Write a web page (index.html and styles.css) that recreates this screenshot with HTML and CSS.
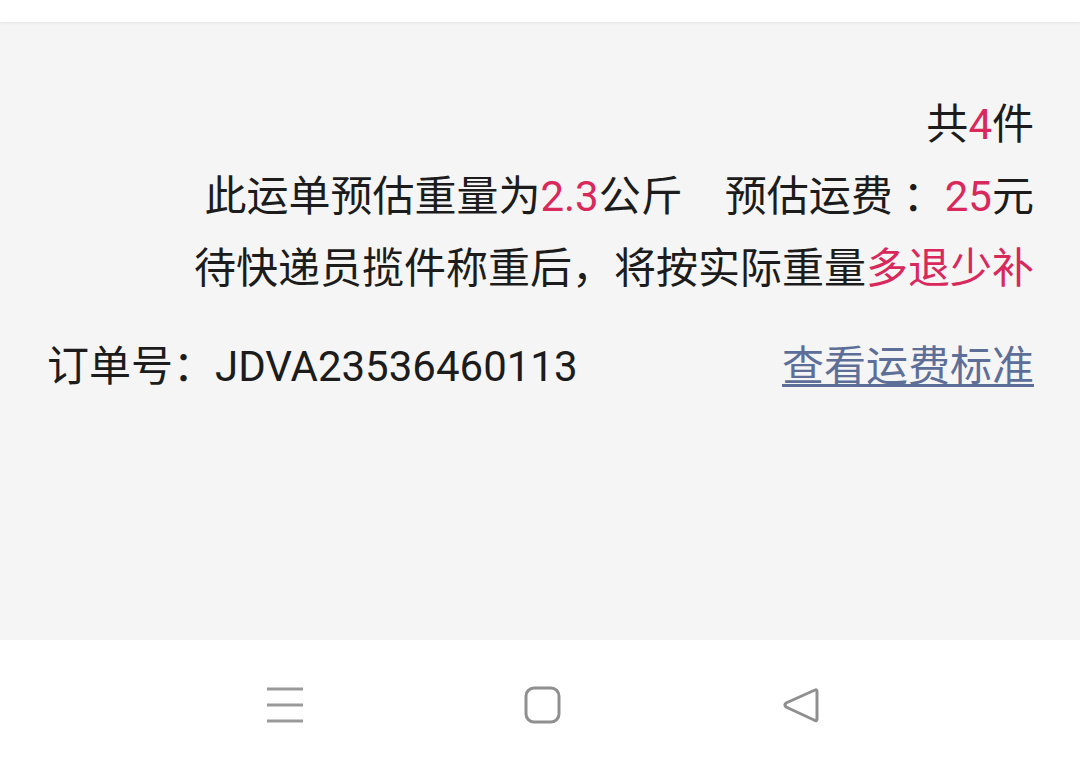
FILE: index.html
```html
<!DOCTYPE html>
<html lang="zh-CN">
<head>
  <meta charset="UTF-8" />
  <meta name="viewport" content="width=device-width, initial-scale=1.0" />
  <title>运单详情</title>
  <link rel="stylesheet" href="styles.css">
</head>
<body>
  <div class="topbar"></div>

  <div class="content">
    <div class="summary">
      <div class="line">共<span class="red">4</span>件</div>
      <div class="line">此运单预估重量为<span class="red">2.3</span>公斤<span class="fee">预估运费<span class="colon">：</span><span class="red">25</span>元</span></div>
      <div class="line">待快递员揽件称重后，将按实际重量<span class="red">多退少补</span></div>
    </div>

    <div class="order">
      <div class="order-no">订单号：<span class="num">JDVA23536460113</span></div>
      <a class="link" href="#">查看运费标准</a>
    </div>
  </div>

  <div class="navbar">
    <svg class="nav-icon" width="40" height="40" viewBox="0 0 40 40">
      <path d="M2 4h36M2 20h36M2 36h36" stroke="#999" stroke-width="3" fill="none"/>
    </svg>
    <svg class="nav-icon" width="40" height="40" viewBox="0 0 40 40">
      <rect x="3" y="3" width="33" height="34" rx="8" stroke="#8f8f8f" stroke-width="3" fill="none"/>
    </svg>
    <svg class="nav-icon" width="40" height="40" viewBox="0 0 40 40">
      <path d="M34 5 Q36 4 36 7 L36 34 Q36 37 33 35 L5 22 Q3 20 5 18 Z" stroke="#8f8f8f" stroke-width="3" fill="none" stroke-linejoin="round"/>
    </svg>
  </div>
</body>
</html>
```

FILE: styles.css
```css
body {
  margin: 0;
  font-family: Roboto, "Noto Sans CJK SC", sans-serif;
  color: #1c1c1c;
  background: #fff;
}
.topbar {
  height: 22px;
  background-color: #fff;
  box-shadow: 0 1px 3px rgba(0,0,0,0.08);
  position: relative;
}
.content {
  height: 618px;
  background-color: #f5f5f5;
  padding: 67px 46px 0 47px;
  box-sizing: border-box;
}
.summary {
  text-align: right;
  font-size: 42px;
}
.line {
  line-height: 72px;
  white-space: nowrap;
}
.red {
  color: #d9285c;
}
.fee {
  margin-left: 42px;
}
.colon {
  display: inline-block;
  width: 52px;
  padding-left: 10px;
  box-sizing: border-box;
}
.order {
  display: flex;
  justify-content: space-between;
  align-items: center;
  margin-top: 21px;
  height: 72px;
  font-size: 42px;
}
.link {
  color: #5d6f98;
  text-decoration: underline;
  text-decoration-thickness: 3px;
  text-underline-offset: 3px;
}
.navbar {
  height: 132px;
  display: flex;
  align-items: center;
  padding-left: 265px;
  padding-bottom: 2px;
  box-sizing: border-box;
}
.nav-icon {
  margin-right: 218px;
}
```
